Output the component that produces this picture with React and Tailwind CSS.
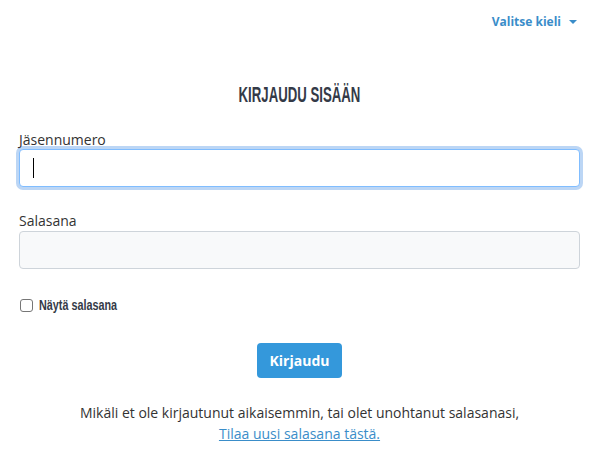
import React from 'react';

const condensed = { fontFamily: '"Liberation Sans", sans-serif' };

const App = () => {
    return (
        <div className="w-[599px] h-[451px] bg-white overflow-hidden" style={{ fontFamily: '"Open Sans", "Liberation Sans", sans-serif' }}>
            <div className="flex justify-end h-[37px] pt-[6px] pr-[22px]">
                <button className="flex items-center gap-[8px] text-[12px] font-bold text-[#3a8dc9]">
                    Valitse kieli
                    <span className="w-0 h-0 border-l-[4px] border-r-[4px] border-t-[4px] border-l-transparent border-r-transparent border-t-[#3a8dc9] mt-[1px]"></span>
                </button>
            </div>
            <div className="px-[19px]">
                <div className="flex justify-center mt-[46px]">
                    <h1 className="inline-block text-[22px] font-bold text-[#343a47] leading-[24px] scale-x-[0.6]" style={condensed}>
                        KIRJAUDU SISÄÄN
                    </h1>
                </div>
                <label className="block text-[14px] text-[#333] mt-[23px] leading-[20px]">Jäsennumero</label>
                <div className="mt-[-1px] h-[38px] rounded-[4px] border border-[#80bdff] ring-[3px] ring-[#bcd6f5] bg-white flex items-center px-[13px]">
                    <span className="w-[1px] h-[20px] bg-black"></span>
                </div>
                <label className="block text-[14px] text-[#333] mt-[24px] leading-[20px]">Salasana</label>
                <div className="mt-[0px] h-[38px] rounded-[4px] border border-[#ced4da] bg-[#f8f9fa]"></div>
                <div className="flex items-center gap-[6px] mt-[25px] ml-[1px]">
                    <span className="w-[13px] h-[13px] rounded-[3px] border border-[#767676] bg-white"></span>
                    <span className="inline-block origin-left text-[15px] font-bold text-[#343a47] scale-x-[0.72]" style={condensed}>Näytä salasana</span>
                </div>
                <div className="flex justify-center mt-[26px]">
                    <button className="w-[85px] h-[35px] rounded-[4px] bg-[#3498db] text-white text-[14px] font-bold">Kirjaudu</button>
                </div>
                <p className="text-center text-[14px] text-[#333] mt-[24px] leading-[21px]">
                    Mikäli et ole kirjautunut aikaisemmin, tai olet unohtanut salasanasi,
                    <br />
                    <a className="text-[#3a8dc9] underline">Tilaa uusi salasana tästä.</a>
                </p>
            </div>
        </div>
    );
};

export default App;
